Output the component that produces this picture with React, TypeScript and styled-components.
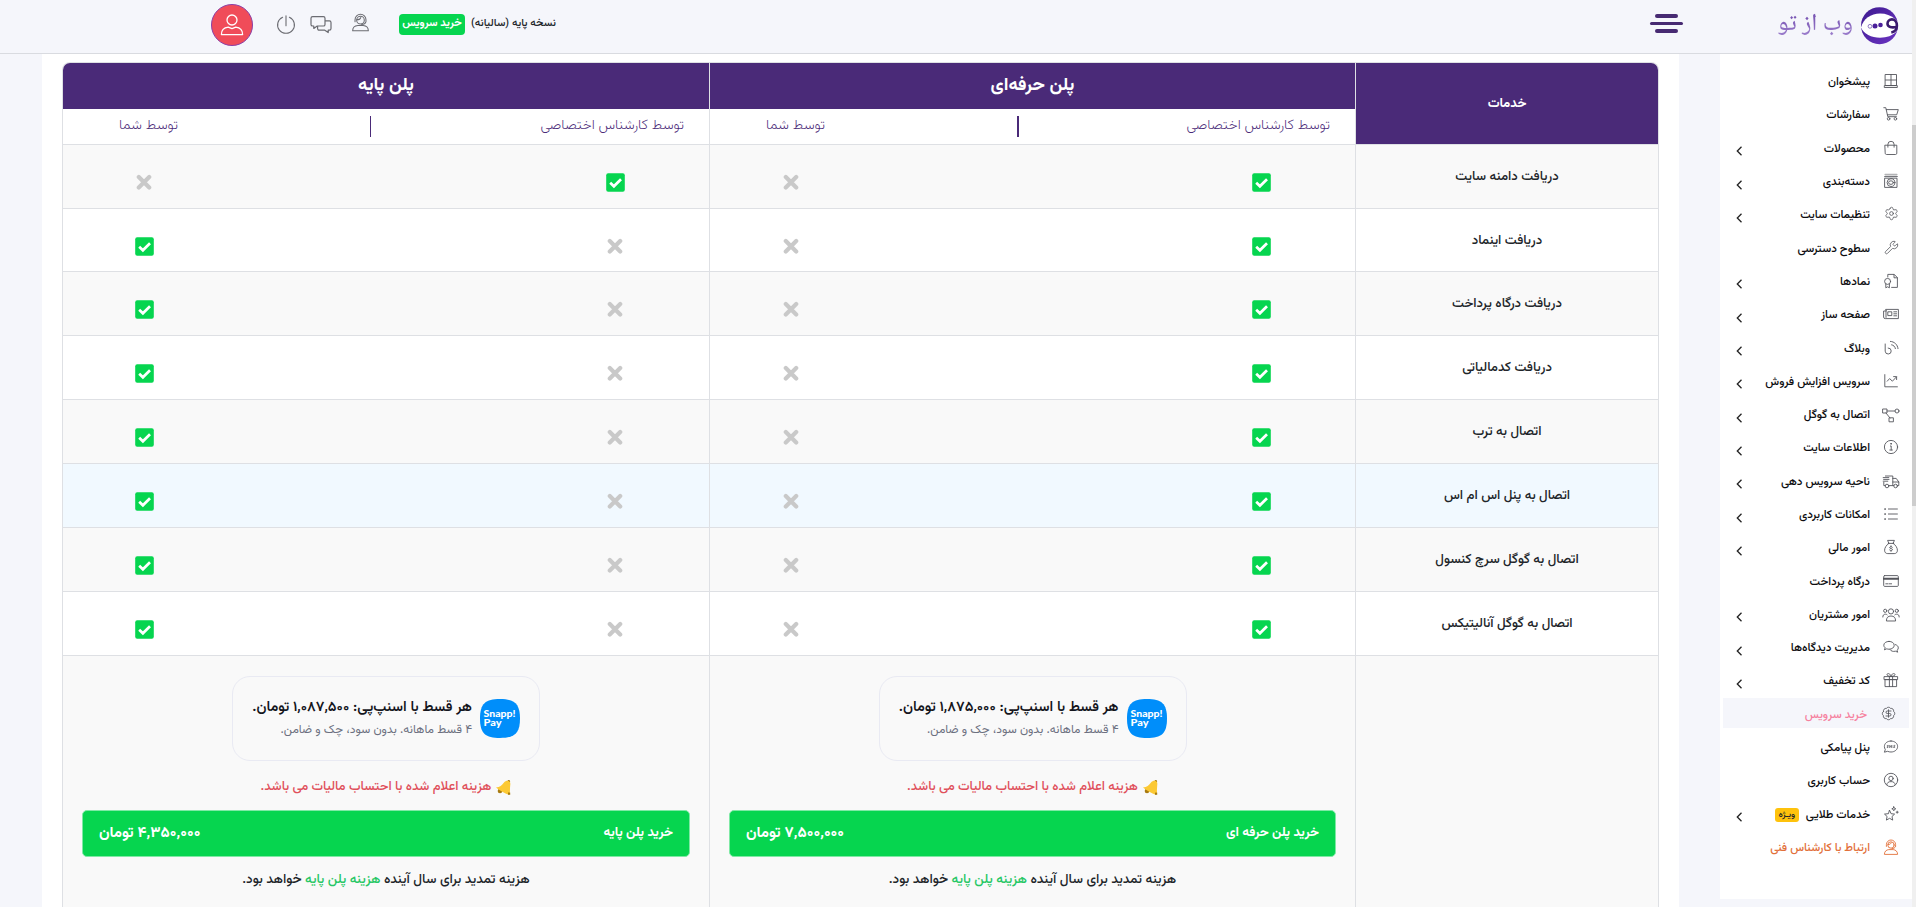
import React from "react";
import styled, { createGlobalStyle, css } from "styled-components";
import { Settings, Wrench, BadgeDollarSign } from "lucide-react";

const purple = "#4a2a78";
const line = "#dee0e4";
const green = "#06d54f";

const GlobalStyle = createGlobalStyle`
  *, *::before, *::after { box-sizing: border-box; }
  html, body { margin: 0; height: 100%; overflow: hidden; }
  body {
    background: #f5f6fb;
    font-family: "Vazirmatn", "DejaVu Sans", sans-serif;
    font-size: 13px;
    color: #212529;
  }
`;

/* ---------- page frame ---------- */

const Page = styled.div`
  display: grid;
  grid-template-columns: 1912px 4px;
  height: 907px;
  overflow: hidden;
`;

const Site = styled.div`
  direction: rtl;
  display: flex;
  flex-direction: column;
  height: 907px;
  overflow: hidden;
`;

const Scrollbar = styled.div`
  background: #f0f0f0;
  padding-top: 125px;
`;

const ScrollThumb = styled.div`
  height: 381px;
  background: #cdcdcd;
`;

const Body = styled.div`
  flex: 1;
  min-height: 0;
  display: flex;
  align-items: flex-start;
`;

/* ---------- header ---------- */

const Header = styled.header`
  flex: none;
  height: 54px;
  display: flex;
  justify-content: space-between;
  border-bottom: 1px solid #d9dbe0;
  background: #f5f6fb;
`;

const HeaderStart = styled.div`
  display: flex;
  padding: 6px 13px 0 0;
`;

const LogoText = styled.span`
  width: 76px;
  height: 44px;
  margin: -2px 7px 0 0;
  font-family: "Noto Naskh Arabic", "DejaVu Sans", serif;
  font-size: 24px;
  font-weight: 500;
  line-height: 42px;
  white-space: nowrap;
  color: #9a7cc9;
  background: linear-gradient(180deg, #7a57b4 30%, #a78bd4 85%);
  background-clip: text;
  -webkit-text-fill-color: transparent;
`;

const MenuButton = styled.div`
  display: flex;
  flex-direction: column;
  align-items: center;
  gap: 4px;
  width: 33px;
  margin-right: 94px;
  padding-top: 8px;
`;

const MenuBar = styled.span<{ $wide?: boolean }>`
  width: ${(p) => (p.$wide ? 33 : 23)}px;
  height: ${(p) => (p.$wide ? 3 : 4)}px;
  border-radius: 2px;
  background: #472a72;
`;

const HeaderEnd = styled.div`
  display: flex;
  padding-left: 211px;
`;

const VersionLabel = styled.span`
  margin-top: 14px;
  line-height: 20px;
  font-size: 10.9px;
  font-weight: 500;
  white-space: nowrap;
`;

const BuyBadge = styled.span`
  margin: 14px 6px 0 29px;
  width: 66px;
  height: 21px;
  border-radius: 4px;
  background: ${green};
  color: #fff;
  font-size: 11px;
  font-weight: 700;
  line-height: 20px;
  text-align: center;
  white-space: nowrap;
`;

const HeaderIcon = styled.span<{ $left: number; $top: number }>`
  margin: ${(p) => p.$top}px 0 0 ${(p) => p.$left}px;
  height: 20px;
  color: #6b6c72;
  svg { display: block; }
`;

const Avatar = styled.span`
  display: flex;
  align-items: center;
  justify-content: center;
  width: 42px;
  height: 42px;
  margin-top: 4px;
  border: 1px solid #8b3fa6;
  border-radius: 50%;
  background: #f04c59;
  color: #fff;
`;

/* ---------- sidebar ---------- */

const Sidebar = styled.aside`
  flex: none;
  width: 192px;
  height: 845px;
  padding: 11.5px 3px 0;
  background: #fff;
`;

const NavItem = styled.a<{ $active?: boolean; $accent?: string }>`
  display: flex;
  align-items: center;
  height: 30.3px;
  margin-bottom: 3px;
  padding: 1px 9px 0 13px;
  font-size: 11.6px;
  font-weight: 500;
  white-space: nowrap;
  color: ${(p) => p.$accent || "#0d0d10"};
  ${(p) =>
    p.$active &&
    css`
      background: #f5f6fb;
      padding-right: 12px;
    `}
`;

const NavLabel = styled.span`
  padding-top: 2px;
`;

const NavIcon = styled.span<{ $accent?: string }>`
  flex: none;
  width: 18px;
  height: 16px;
  margin-left: 12px;
  color: ${(p) => p.$accent || "#55565c"};
  svg { display: block; margin: 0 auto; }
`;

const Badge = styled.span`
  margin: 3px 7px 0 0;
  height: 14px;
  width: 24px;
  border-radius: 3px;
  background: #fec20c;
  color: #212529;
  font-size: 9px;
  line-height: 14px;
  text-align: center;
`;

const Chevron = styled.span`
  margin: 7px auto 0 0;
  svg { display: block; }
`;

/* ---------- content ---------- */

const Main = styled.main`
  width: 1637px;
  height: 853px;
  margin-right: 41px;
  padding: 8px 20px 0;
  background: #fff;
`;

const Table = styled.div`
  border: 1px solid ${line};
  border-bottom: 0;
  border-radius: 8px 8px 0 0;
  overflow: hidden;
  height: 845px;
  background: #f9f9f9;
`;

const Row = styled.div<{ $bg?: string; $height: number }>`
  display: grid;
  grid-template-columns: 302px 646px 647px;
  height: ${(p) => p.$height}px;
  background: ${(p) => p.$bg || "#fff"};
  border-bottom: 1px solid ${line};
  & > * + * { border-right: 1px solid ${line}; }
`;

const ServicesHead = styled.div`
  display: flex;
  align-items: center;
  justify-content: center;
  background: ${purple};
  color: #fff;
  font-size: 13.2px;
  font-weight: 700;
`;

const PlanHead = styled.div`
  display: grid;
  grid-template-rows: 46px 1fr;
`;

const PlanTitle = styled.div`
  background: ${purple};
  color: #fff;
  font-size: 18.2px;
  font-weight: 700;
  line-height: 46px;
  text-align: center;
`;

const PlanSub = styled.div`
  display: flex;
  padding: 0 25px 0 58px;
  color: ${purple};
  font-size: 14.2px;
  font-weight: 200;
  line-height: 33px;
`;

const PlanDivider = styled.span<{ $w: number }>`
  flex: none;
  width: ${(p) => p.$w}px;
  height: 21px;
  margin: 7px 0 0 192px;
  background: ${purple};
`;

const SubLabel = styled.span<{ $w?: number }>`
  flex: ${(p) => (p.$w ? "none" : "1")};
  width: ${(p) => (p.$w ? p.$w + "px" : "auto")};
  white-space: nowrap;
`;

const ServiceName = styled.div`
  display: flex;
  align-items: center;
  justify-content: center;
  font-size: 13.25px;
  font-weight: 500;
`;

const Marks = styled.div`
  display: flex;
  justify-content: space-between;
  padding: 28px 84px 0 71px;
`;

const Mark = styled.span`
  width: 20px;
  height: 19px;
  svg { display: block; margin: 0 auto; }
`;

const Offer = styled.div`
  display: flex;
  flex-direction: column;
  align-items: center;
  padding: 20px 19px 0;
  height: 252px;
`;

const PayCard = styled.div`
  display: flex;
  width: 308px;
  height: 85px;
  padding: 22px 19px 0 0;
  border: 1px solid #e9eaf3;
  border-radius: 18px;
`;

const PayLogo = styled.span`
  width: 40px;
  height: 39px;
  margin-left: 8px;
`;

const PayTitle = styled.div`
  font-size: 14.45px;
  font-weight: 600;
  line-height: 18px;
  white-space: nowrap;
  color: #14151c;
`;

const PayNote = styled.div`
  margin-top: 4px;
  font-size: 12px;
  line-height: 18px;
  white-space: nowrap;
  color: #6c7080;
`;

const TaxNote = styled.div`
  display: flex;
  align-items: center;
  gap: 5px;
  height: 20px;
  margin-top: 16px;
  font-size: 13px;
  font-weight: 500;
  color: #e0505b;
`;

const BuyButton = styled.div`
  display: flex;
  justify-content: space-between;
  align-self: stretch;
  height: 47px;
  margin-top: 13px;
  padding: 0 16px;
  border: 1px solid #7fe9a5;
  border-radius: 5px;
  background: ${green};
  color: #fff;
  font-size: 13.2px;
  font-weight: 700;
  line-height: 44px;
`;

const Price = styled.span`
  font-size: 15.2px;
`;

const Renewal = styled.div`
  margin-top: 12px;
  font-size: 13.5px;
  font-weight: 500;
  line-height: 22px;
  b { font-weight: 500; color: #27c765; }
`;

/* ---------- drawings ---------- */

const Svg = ({ children, s = 16, vb = "0 0 16 16", sw = 0.9 }: { children: React.ReactNode; s?: number; vb?: string; sw?: number }) => (
  <svg width={s} height={s} viewBox={vb} fill="none" stroke="currentColor" strokeWidth={sw} strokeLinecap="round" strokeLinejoin="round">
    {children}
  </svg>
);

const AgentShape = () => (
  <>
    <circle cx="8" cy="6" r="3.2" />
    <path d="M3.4 7.4V5.6a4.6 4.6 0 0 1 9.2 0v1.8M5 5.600c2.200 0 3-1 3.200-1.800M12.400 7.600c-.4 1.400-1.600 2-3.400 2" />
    <path d="M1.400 15c0-2.600 2-4.200 4.400-4.400h4.400c2.400.2 4.400 1.800 4.400 4.400z" />
  </>
);

const icons: Record<string, React.ReactNode> = {
  window: <Svg><path d="M2.5 1.5h11v11h-11zM8 1.5v11M2.5 7h11M1.7 12.6h12.6v1.9H1.7z" /></Svg>,
  cart: <Svg><path d="M.8 1.7h2l2 9h8.6M3.3 3.6h12l-1.6 5.2H4.4" /><circle cx="5.6" cy="12.8" r="1.3" /><circle cx="12.4" cy="12.8" r="1.3" /></Svg>,
  bag: <Svg><path d="M2.2 5.2h11.6v8c0 .8-.5 1.3-1.3 1.3h-9c-.8 0-1.3-.5-1.3-1.3zM4.9 7.2V4.4a3.1 3.1 0 0 1 6.2 0v2.8" /></Svg>,
  category: <Svg><path d="M2.2 1.6h11.6" strokeWidth="1.6" opacity=".45" /><path d="M1.6 3.6h12.8M2 5.2h12v9.2H2z" /><circle cx="8" cy="9.6" r="3.9" /><ellipse cx="8" cy="9.6" rx="2.4" ry="1.8" /></Svg>,
  gear: <Settings size={15} strokeWidth={1.3} />,
  wrench: <Wrench size={15} strokeWidth={1.3} />,
  certificate: <Svg><path d="M4.8 4V1.4h6.4L14.4 4.6v9.8H8.6M11 1.6v3.2h3.2" /><circle cx="4.6" cy="8.4" r="3" /><path d="M2.8 11v3.800l1.800-1 1.800 1V11" /></Svg>,
  news: <Svg><path d="M3 3.400h12.400v9.200H2.200a1.600 1.600 0 0 1-1.600-1.600V5H3zM3 5v6.400" /><path d="M5.200 5.800h3.600v3.800H5.200zM10.800 5.800h2.800M10.800 7.800h2.800M10.800 9.800h2.800" /></Svg>,
  blog: <Svg><path d="M2.200 4v7.200a3 3 0 1 0 3-3.200M8.600 4.800c2 .3 3.400 1.800 3.800 3.800M7.400 1.400c4 .2 7.200 3.200 7.600 7.200" /></Svg>,
  chart: <Svg><path d="M1.800 1.600v12.200h12.600M4.200 8.200l2.400-2.600 2.800 2.600 4-4.200M10.600 3.600h3v3" /></Svg>,
  nodes: <Svg s={18} vb="0 0 18 18"><path d="M1 3h4v4H1zM5 5h8M4 7l4 5" /><circle cx="15" cy="5" r="2" /><path d="M7.400 11.800h4v4h-4z" /></Svg>,
  info: <Svg><circle cx="8" cy="8" r="6.600" /><path d="M7.400 7h.8v4M6.800 11h2.600" /><circle cx="8" cy="4.800" r=".4" fill="currentColor" /></Svg>,
  truck: <Svg s={18} vb="0 0 18 18"><path d="M3.400 3h7.400v9.600H7M3 12.600H1.800V9.400M10.800 5.400h3.400l2.600 3.600v3.600h-1.400M10.800 9h6M10.800 12.600h1" /><path d="M1.200 4.600h5.600M1.600 6.400h5.400M1.200 8.200h4.600" /><circle cx="5" cy="13" r="1.800" /><circle cx="13.600" cy="13" r="1.800" /></Svg>,
  list: <Svg><path d="M5.400 3h9M5.400 8h9M5.400 13h9" /><path d="M2 3h.2M2 8h.2M2 13h.2" strokeWidth="1.700" /></Svg>,
  money: <Svg><path d="M5.800 4.200 4.600 1.400h6.800l-1.200 2.800M5.200 4.400h5.600M5.800 4.400C3.400 6 1.600 8.800 1.600 11.200c0 2.200 1.200 3.400 3.200 3.400h6.400c2 0 3.200-1.200 3.200-3.400 0-2.400-1.800-5.200-4.200-6.800" /><path d="M9.400 8.200c-.4-.6-2.800-.8-2.800.4 0 1.300 2.900.6 2.900 2 0 1.200-2.500 1.100-3 .3M8 6.800v.8M8 11.600v.8" /></Svg>,
  card: <Svg><path d="M1.600 2.600h12.800c.5 0 .9.400.9.900v9c0 .5-.4.900-.9.900H1.600c-.5 0-.9-.4-.9-.9v-9c0-.5.4-.9.900-.9z" /><path d="M.8 5.800h14.400" strokeWidth="2" /><path d="M2.800 10.800h2M6 10.800h2.600" /></Svg>,
  users: <Svg s={18} vb="0 0 18 18"><circle cx="9" cy="5.400" r="2.600" /><path d="M4.400 14.600c0-3 1.600-4.600 4.600-4.600s4.600 1.600 4.600 4.600z" /><circle cx="3.200" cy="4.800" r="1.600" /><circle cx="14.800" cy="4.800" r="1.600" /><path d="M.8 11c0-1.800.8-2.800 2.600-2.800.8 0 1.400.2 1.800.6M17.200 11c0-1.800-.8-2.800-2.600-2.800-.8 0-1.400.2-1.800.6" /></Svg>,
  chat: <Svg><path d="M6 2.400c3 0 5.200 1.600 5.200 3.900S9 10.200 6 10.200c-.8 0-1.500-.1-2.200-.4L1.400 10.800l.8-2C1.300 8.100.8 7.200.8 6.300.8 4 3 2.400 6 2.400z" /><path d="M12.400 5.600c1.800.5 2.900 1.700 2.900 3.300 0 .9-.4 1.700-1.200 2.300l.6 2-2.300-1c-2.200.6-4.400 0-5.400-1.600" /></Svg>,
  gift: <Svg><path d="M1.400 4.600h13.200v3H1.400zM2.400 7.600h11.200v7H2.400zM6.400 4.600v10M9.600 4.600v10M8 4.400C6.400 4.400 4 3.800 4 2.600c0-1.600 3.200-1.600 4 1.800.8-3.400 4-3.400 4-1.800 0 1.200-2.400 1.800-4 1.800z" /></Svg>,
  dollar: <BadgeDollarSign size={15} strokeWidth={1.4} />,
  sms: (
    <Svg>
      <path d="M8 2c3.800 0 6.600 2.400 6.600 5.500S11.800 13 8 13c-1.200 0-2.400-.2-3.400-.7l-3.200.9.900-2.700C1.700 9.600 1.400 8.600 1.400 7.500 1.400 4.400 4.200 2 8 2z" />
      <path d="M5.200 6.400c-1.400-.3-1.400 1-.5 1.100 1 .2.800 1.400-.5 1M6.800 8.600V6.400l1 1.200 1-1.200v2.200M11.800 6.400c-1.400-.3-1.400 1-.5 1.100 1 .2.800 1.400-.6 1" />
    </Svg>
  ),
  account: <Svg><circle cx="8" cy="8" r="6.700" /><circle cx="8" cy="6.400" r="2.200" /><path d="M3.800 12.600c.3-2 1.700-3 4.200-3s3.900 1 4.200 3" /></Svg>,
  star: <Svg><path d="m6.600 4.400 1.500 3.300 3.500.4-2.600 2.400.7 3.600-3.100-1.800-3.200 1.800.7-3.600L1.500 8.100l3.600-.4z" /><path d="m10.800.8.600 1.400 1.400.6-1.400.6-.6 1.400-.6-1.400L8.800 2.800l1.400-.6zM14.200 5.200v2M13.200 6.200h2" /></Svg>,
  agent: <Svg><AgentShape /></Svg>,
};

const LogoMark = () => (
  <svg width="39" height="40" viewBox="0 0 39 40">
    <defs>
      <linearGradient id="mark" x1="0" y1="0" x2="1" y2="1">
        <stop offset="0" stopColor="#3d1a8f" />
        <stop offset="1" stopColor="#6d35c4" />
      </linearGradient>
    </defs>
    <circle cx="19.500" cy="19.700" r="18.500" fill="url(#mark)" />
    <path d="M1 21.500C3 13 11 7.500 20 7.500c6 0 11 2 14.500 5l3.300 3.200c.6 3.600-.4 8.300-1.800 10.300-3.500 3.500-9 5.700-16 5.700C11.500 31.700 3.500 28 1 21.500z" fill="#fff" />
    <path d="M36.800 20.800c-5 1.300-9.300.2-9.300-3 0-2.600 1.900-4.400 4.400-4.400 2.900 0 5 2.600 5 6.400 0 3.400-1.800 6-5.600 6.700" fill="none" stroke="#3a1a6e" strokeWidth="2.600" />
    <circle cx="20.500" cy="19" r="2.300" fill="#4a1f9a" />
    <circle cx="15" cy="20" r="2.500" fill="#4a1f9a" />
    <circle cx="10" cy="20.300" r="1.900" fill="none" stroke="#8f7ac4" />
  </svg>
);

const SnappPay = () => (
  <svg width="40" height="39" viewBox="0 0 40 39" direction="ltr">
    <path d="M20 0c14.500 0 20 4.500 20 19.500S34.500 39 20 39 0 34.500 0 19.500 5.500 0 20 0z" fill="#008efa" />
    <g fill="#fff" fontFamily="Lato, sans-serif" fontWeight="900" fontSize="10">
      <text x="3.600" y="17.500" textLength="32" lengthAdjust="spacingAndGlyphs">Snapp!</text>
      <text x="3.600" y="27" textLength="18" lengthAdjust="spacingAndGlyphs">Pay</text>
    </g>
  </svg>
);

const Bell = () => (
  <svg width="15" height="15" viewBox="0 0 15 15">
    <circle cx="4" cy="11" r="2.300" fill="#a87b12" />
    <circle cx="12.800" cy="1.400" r="1.300" fill="#a87b12" />
    <path d="M0 7.600C4 7 5.800 5.400 7.800 2.800 9.600.8 11.600.4 13.400 1.400c1.200 1 1 2.600.8 4.200-.3 2.800-.3 5.400-.2 8L12.600 14.800C9 13.400 3.600 11 0 7.600z" fill="#fcc934" />
    <path d="M12 12.600h2.200v2.200H12z" fill="#a87b12" />
  </svg>
);

const Check = () => (
  <svg width="19" height="19" viewBox="0 0 19 19">
    <rect x=".2" y=".2" width="18.600" height="18.600" rx="2" fill={green} />
    <path d="m4.200 9.700 3.700 3.600L15 6.200" fill="none" stroke="#fff" strokeWidth="2.700" />
  </svg>
);

const Cross = () => (
  <svg width="16" height="19" viewBox="0 0 16 19">
    <path d="m2.800 4 10.400 10.400m0-10.400L2.800 14.400" fill="none" stroke="#c9c9c9" strokeWidth="4.200" strokeLinecap="round" />
  </svg>
);

/* ---------- data ---------- */

type Nav = { icon: string; label: string; more?: boolean; active?: boolean; accent?: string; badge?: string };

const nav: Nav[] = [
  { icon: "window", label: "پیشخوان" },
  { icon: "cart", label: "سفارشات" },
  { icon: "bag", label: "محصولات", more: true },
  { icon: "category", label: "دسته‌بندی", more: true },
  { icon: "gear", label: "تنظیمات سایت", more: true },
  { icon: "wrench", label: "سطوح دسترسی" },
  { icon: "certificate", label: "نمادها", more: true },
  { icon: "news", label: "صفحه ساز", more: true },
  { icon: "blog", label: "وبلاگ", more: true },
  { icon: "chart", label: "سرویس افزایش فروش", more: true },
  { icon: "nodes", label: "اتصال به گوگل", more: true },
  { icon: "info", label: "اطلاعات سایت", more: true },
  { icon: "truck", label: "ناحیه سرویس دهی", more: true },
  { icon: "list", label: "امکانات کاربردی", more: true },
  { icon: "money", label: "امور مالی", more: true },
  { icon: "card", label: "درگاه پرداخت" },
  { icon: "users", label: "امور مشتریان", more: true },
  { icon: "chat", label: "مدیریت دیدگاه‌ها", more: true },
  { icon: "gift", label: "کد تخفیف", more: true },
  { icon: "dollar", label: "خرید سرویس", active: true, accent: "#f5829f" },
  { icon: "sms", label: "پنل پیامکی" },
  { icon: "account", label: "حساب کاربری" },
  { icon: "star", label: "خدمات طلایی", more: true, badge: "ویـژه" },
  { icon: "agent", label: "ارتباط با کارشناس فنی", accent: "#e2703a" },
];

type Service = { name: string; pro: [boolean, boolean]; base: [boolean, boolean]; hover?: boolean };

const services: Service[] = [
  { name: "دریافت دامنه سایت", pro: [true, false], base: [true, false] },
  { name: "دریافت اینماد", pro: [true, false], base: [false, true] },
  { name: "دریافت درگاه پرداخت", pro: [true, false], base: [false, true] },
  { name: "دریافت کدمالیاتی", pro: [true, false], base: [false, true] },
  { name: "اتصال به ترب", pro: [true, false], base: [false, true] },
  { name: "اتصال به پنل اس ام اس", pro: [true, false], base: [false, true], hover: true },
  { name: "اتصال به گوگل سرچ کنسول", pro: [true, false], base: [false, true] },
  { name: "اتصال به گوگل آنالیتیکس", pro: [true, false], base: [false, true] },
];

const offers = [
  { part: "۱,۸۷۵,۰۰۰", buy: "خرید پلن حرفه ای", price: "۷,۵۰۰,۰۰۰ تومان" },
  { part: "۱,۰۸۷,۵۰۰", buy: "خرید پلن پایه", price: "۴,۳۵۰,۰۰۰ تومان" },
];

const PlanHeader = ({ title, w }: { title: string; w: number }) => (
  <PlanHead>
    <PlanTitle>{title}</PlanTitle>
    <PlanSub>
      <SubLabel>توسط کارشناس اختصاصی</SubLabel>
      <PlanDivider $w={w} />
      <SubLabel $w={57}>توسط شما</SubLabel>
    </PlanSub>
  </PlanHead>
);

const MarkPair = ({ values }: { values: [boolean, boolean] }) => (
  <Marks>
    {values.map((v, i) => (
      <Mark key={i}>{v ? <Check /> : <Cross />}</Mark>
    ))}
  </Marks>
);

export default function App() {
  return (
    <Page>
      <GlobalStyle />
      <Site>
        <Header>
          <HeaderStart>
            <LogoMark />
            <LogoText>وب از تو</LogoText>
            <MenuButton>
              <MenuBar />
              <MenuBar $wide />
              <MenuBar />
            </MenuButton>
          </HeaderStart>
          <HeaderEnd>
            <VersionLabel>نسخه پایه (سالیانه)</VersionLabel>
            <BuyBadge>خرید سرویس</BuyBadge>
            <HeaderIcon $left={19} $top={13}>
              <Svg s={19}><AgentShape /></Svg>
            </HeaderIcon>
            <HeaderIcon $left={14} $top={14}>
              <Svg s={22} vb="0 0 22 22" sw={1.2}>
                <path d="M2.600 2.600h10.800c.9 0 1.600.7 1.600 1.600v6.200c0 .9-.7 1.600-1.600 1.600H7.200L3.800 14.400V12H2.600C1.700 12 1 11.300 1 10.400V4.200c0-.9.700-1.600 1.600-1.600zM15 6.800h4.400c.9 0 1.600.7 1.600 1.600v6.200c0 .9-.7 1.600-1.600 1.600h-1.200v2.400l-3.400-2.400H9.200c-.9 0-1.600-.7-1.600-1.600V12" />
              </Svg>
            </HeaderIcon>
            <HeaderIcon $left={23} $top={15}>
              <Svg s={20} vb="0 0 20 20" sw={1.1}>
                <path d="M10 .8v10M6.600 2.200a8.400 8.400 0 1 0 6.800 0" />
              </Svg>
            </HeaderIcon>
            <Avatar>
              <Svg s={24} vb="0 0 24 24" sw={1.3}>
                <circle cx="12" cy="7" r="5" />
                <path d="M1.400 21.600c0-4.600 3-7 6.800-7.400l3.800 1.400 3.800-1.400c3.800.4 6.800 2.800 6.800 7.400z" />
              </Svg>
            </Avatar>
          </HeaderEnd>
        </Header>
        <Body>
          <Sidebar>
            {nav.map((n) => (
              <NavItem key={n.label} $active={n.active} $accent={n.accent}>
                <NavIcon $accent={n.active ? undefined : n.accent}>{icons[n.icon]}</NavIcon>
                <NavLabel>{n.label}</NavLabel>
                {n.badge && <Badge>{n.badge}</Badge>}
                {n.more && (
                  <Chevron>
                    <svg width="7" height="10" viewBox="0 0 7 10"><path d="M5.500.8 1.300 5l4.200 4.200" fill="none" stroke="#222" strokeWidth="1.300" /></svg>
                  </Chevron>
                )}
              </NavItem>
            ))}
          </Sidebar>
          <Main>
            <Table>
              <Row $height={82}>
                <ServicesHead>خدمات</ServicesHead>
                <PlanHeader title="پلن حرفه‌ای" w={2} />
                <PlanHeader title="پلن پایه" w={1} />
              </Row>
              {services.map((s, i) => (
                <Row key={s.name} $height={i === 1 ? 63 : 64} $bg={s.hover ? "#f1f9ff" : i % 2 ? "#fff" : "#f9f9f9"}>
                  <ServiceName>{s.name}</ServiceName>
                  <MarkPair values={s.pro} />
                  <MarkPair values={s.base} />
                </Row>
              ))}
              <Row $height={252} $bg="#f9f9f9">
                <div />
                {offers.map((o) => (
                  <Offer key={o.buy}>
                    <PayCard>
                      <PayLogo><SnappPay /></PayLogo>
                      <div>
                        <PayTitle>هر قسط با اسنپ‌پی: {o.part} تومان.</PayTitle>
                        <PayNote>۴ قسط ماهانه. بدون سود، چک و ضامن.</PayNote>
                      </div>
                    </PayCard>
                    <TaxNote><Bell />هزینه اعلام شده با احتساب مالیات می باشد.</TaxNote>
                    <BuyButton>
                      <span>{o.buy}</span>
                      <Price>{o.price}</Price>
                    </BuyButton>
                    <Renewal>هزینه تمدید برای سال آینده <b>هزینه پلن پایه</b> خواهد بود.</Renewal>
                  </Offer>
                ))}
              </Row>
            </Table>
          </Main>
        </Body>
      </Site>
      <Scrollbar><ScrollThumb /></Scrollbar>
    </Page>
  );
}
